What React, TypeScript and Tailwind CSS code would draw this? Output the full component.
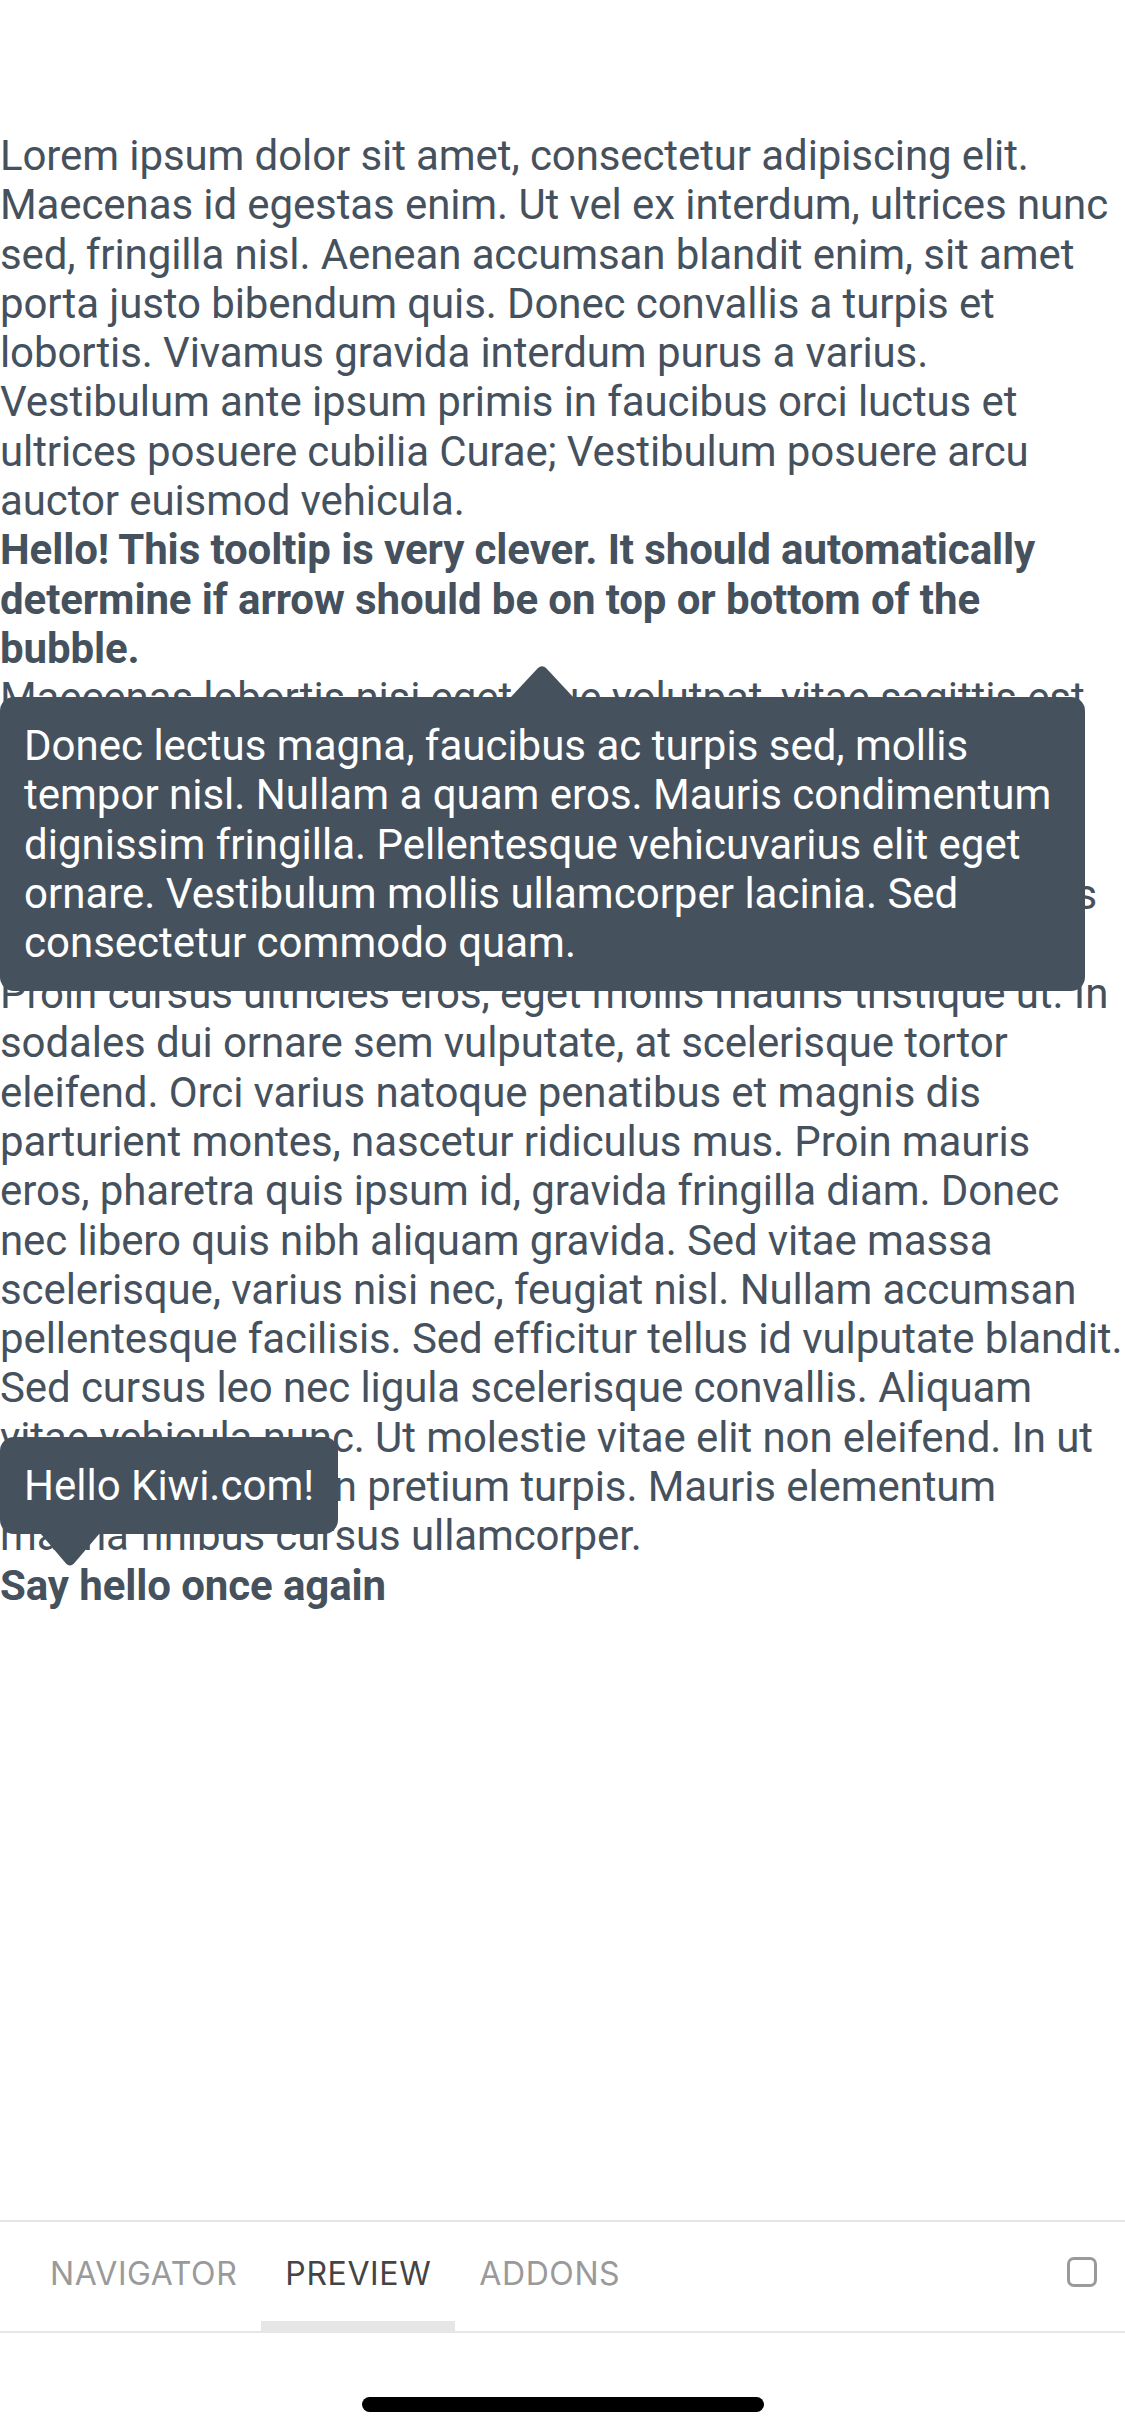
import React from "react";

const ink = "text-[#46515e]";

function ArrowUp() {
  return (
    <svg width="64" height="33" viewBox="0 0 64 33" className="block">
      <path d="M0 33 L27.5 3.5 Q32 -1 36.5 3.5 L64 33 Z" fill="#46515e" />
    </svg>
  );
}

function ArrowDown() {
  return (
    <svg width="60" height="34" viewBox="0 0 60 34" className="block">
      <path d="M0 0 L25.8 30.2 Q30 35 34.2 30.2 L60 0 Z" fill="#46515e" />
    </svg>
  );
}

function Tooltip({ children, className }: { children: React.ReactNode; className: string }) {
  return (
    <div className={`absolute left-0 rounded-[14px] bg-[#46515e] px-[24px] py-[24px] text-white ${className}`}>
      {children}
    </div>
  );
}

const tabs = ["NAVIGATOR", "PREVIEW", "ADDONS"];

export default function App() {
  return (
    <div className="flex h-[2436px] w-[1125px] flex-col bg-white font-['Roboto',sans-serif]">
      <main className="relative flex-1 pt-[131px]">
        <div className={`text-[42px] leading-[49.3px] tracking-[-0.1px] ${ink}`}>
          <p>
            Lorem ipsum dolor sit amet, consectetur adipiscing elit. Maecenas id egestas enim. Ut vel ex
            interdum, ultrices nunc sed, fringilla nisl. Aenean accumsan blandit enim, sit amet porta justo
            bibendum quis. Donec convallis a turpis et lobortis. Vivamus gravida interdum purus a varius.
            Vestibulum ante ipsum primis in faucibus orci luctus et ultrices posuere cubilia Curae; Vestibulum
            posuere arcu auctor euismod vehicula.
          </p>
          <p className="font-bold">
            Hello! This tooltip is very clever. It should automatically determine if arrow should be on top or
            bottom of the bubble.
          </p>
          <p>
            Maecenas lobortis nisi eget ique volutpat, vitae sagittis est
            <br />
            sollicitudin nisl. Pellentesque habitant morbi
            <br />
            tristique senectus et netus et malesuada fames ac
            <br />
            turpis egestas. Integer vel nisl ut libero convallis
            <br />
            aliquam. Nunc a lacus non mauris tincidunt, pulvinar mattis
            <br />
            ante at rhoncus efficitur, mi erat tempor risus, et
            <br />
            Proin cursus ultricies eros, eget mollis mauris tristique ut. In sodales dui ornare sem vulputate, at
            scelerisque tortor eleifend. Orci varius natoque penatibus et magnis dis parturient montes, nascetur
            ridiculus mus. Proin mauris eros, pharetra quis ipsum id, gravida fringilla diam. Donec nec libero
            quis nibh aliquam gravida. Sed vitae massa scelerisque, varius nisi nec, feugiat nisl. Nullam
            accumsan pellentesque facilisis. Sed efficitur tellus id vulputate blandit. Sed cursus leo nec ligula
            scelerisque convallis. Aliquam vitae vehicula nunc. Ut molestie vitae elit non eleifend. In ut nisl
            quis lectus non pretium turpis. Mauris elementum magna finibus cursus ullamcorper.
          </p>
          <p className="font-bold">Say hello once again</p>
        </div>

        {/* tooltip under the bold line */}
        <Tooltip className="top-[697px] w-[1085px]">
          <div className="absolute left-[510px] top-[-32px]">
            <ArrowUp />
          </div>
          <p className="text-[42px] leading-[49.3px]">
            Donec lectus magna, faucibus ac turpis sed, mollis tempor nisl. Nullam a quam eros. Mauris
            condimentum dignissim fringilla. Pellentesque vehicuvarius elit eget ornare. Vestibulum mollis
            ullamcorper lacinia. Sed consectetur commodo quam.
          </p>
        </Tooltip>

        {/* tooltip above the last line */}
        <Tooltip className="top-[1437px]">
          <p className="whitespace-nowrap text-[42px] leading-[49.3px]">Hello Kiwi.com!</p>
          <div className="absolute left-[40px] bottom-[-33px]">
            <ArrowDown />
          </div>
        </Tooltip>
      </main>

      <nav className="flex h-[113px] items-stretch border-y-2 border-[#e6e6e6] pl-[26px] pr-[28px] font-['Inter',sans-serif]">
        {tabs.map((t) => {
          const active = t === "PREVIEW";
          return (
            <div
              key={t}
              className={`flex items-center border-b-[10px] px-[24px] pt-[4px] text-[32px] tracking-[0.6px] ${
                active ? "border-[#e6e6e6] text-[#444444]" : "border-transparent text-[#9a9a9a]"
              }`}
            >
              {t}
            </div>
          );
        })}
        <div className="ml-auto flex items-center pb-[9px]">
          <div className="h-[30px] w-[30px] rounded-[7px] border-[3px] border-[#9a9a9a]" />
        </div>
      </nav>

      <div className="flex h-[103px] items-start justify-center pt-[64px]">
        <div className="h-[15px] w-[402px] rounded-full bg-black" />
      </div>
    </div>
  );
}
